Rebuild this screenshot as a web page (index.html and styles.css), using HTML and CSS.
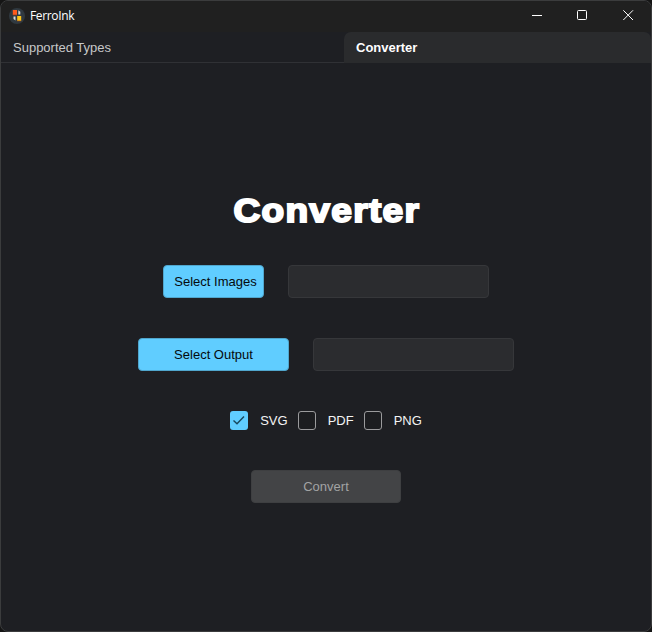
FILE: index.html
```
<!DOCTYPE html>
<html lang="en">
<head>
<meta charset="utf-8">
<title>FerroInk</title>
<link rel="stylesheet" href="styles.css">
</head>
<body>
<div class="window">
  <header class="titlebar">
    <svg class="logo" width="16" height="16" viewBox="0 0 16 16">
      <circle cx="8" cy="8" r="8" fill="#303940"/>
      <rect x="3.8" y="2" width="4.2" height="5" fill="#ff5a1c"/>
      <path d="M9.3 2.3l2 1.5v2.7h-2z" fill="#c9ced0"/>
      <path d="M4.5 8.5h2v4l-2-1.5z" fill="#d5d8d8"/>
      <rect x="8.2" y="8" width="4" height="5" fill="#ffc414"/>
      <path d="M4 7h4M8 13h4" stroke="#8d3c20" stroke-width=".7"/>
    </svg>
    <span class="app-name">FerroInk</span>
    <div class="controls">
      <svg width="46" height="31" viewBox="0 0 46 31"><path d="M18 14.5h10"/></svg>
      <svg width="45" height="31" viewBox="0 0 45 31"><rect x="17.5" y="9.5" width="9" height="9" rx="1"/></svg>
      <svg width="46" height="31" viewBox="0 0 46 31"><path d="M18.3 9.3l9.7 9.7M28 9.3L18.3 19"/></svg>
    </div>
  </header>
  <nav class="tabs">
    <div class="tab"><span>Supported Types</span></div>
    <div class="tab active"><span>Converter</span></div>
  </nav>
  <main class="content">
    <h1>Converter</h1>
    <div class="row">
      <button class="btn narrow"><span>Select Images</span></button>
      <input class="field" type="text" aria-label="Images">
    </div>
    <div class="row second">
      <button class="btn"><span>Select Output</span></button>
      <input class="field" type="text" aria-label="Output">
    </div>
    <div class="formats">
      <label><i class="box checked"><svg width="18" height="18" viewBox="0 0 18 18"><path d="M3.5 9.5l3.5 3.3 7-7.4"/></svg></i><span>SVG</span></label>
      <label><i class="box"></i><span>PDF</span></label>
      <label><i class="box"></i><span>PNG</span></label>
    </div>
    <button class="btn disabled" disabled><span>Convert</span></button>
  </main>
</div>
</body>
</html>
```
FILE: styles.css
```
* { box-sizing: border-box; }
body {
  margin: 0;
  background: #151515;
  font: 13px/16px "Liberation Sans", Arial, sans-serif;
  color: #f4f4f4;
}
.window {
  width: 652px;
  height: 632px;
  border: 1px solid #3b3c3d;
  border-radius: 8px;
  overflow: hidden;
  background: #1e1f23;
  display: flex;
  flex-direction: column;
}
.titlebar {
  height: 31px;
  flex: none;
  display: flex;
  align-items: center;
  padding-left: 8px;
  background: #202020;
}
.logo { margin-bottom: 2px; }
.app-name {
  margin: 0 0 1px 5px;
  font: 12px/16px "Open Sans", "Noto Sans", sans-serif;
  letter-spacing: -0.35px;
  color: #fff;
}
.controls { display: flex; margin-left: auto; }
.controls svg { fill: none; stroke: #fff; stroke-width: 1; }
.tabs { display: flex; height: 31px; flex: none; }
.tab {
  width: 343px;
  padding: 8px 12px 0;
  border-bottom: 1px solid #303135;
  color: #c7c8c9;
}
.tab.active {
  width: 307px;
  background: #2a2b2d;
  border-color: #2a2b2d;
  border-radius: 7px 7px 0 0;
  color: #fff;
  font-weight: bold;
}
.content {
  flex: 1;
  display: flex;
  flex-direction: column;
  align-items: center;
  padding-top: 127px;
}
h1 {
  margin: 0 0 35px;
  font-size: 34px;
  line-height: 40px;
  font-weight: bold;
  letter-spacing: 1.2px;
  padding-left: 2px;
  color: #fff;
  -webkit-text-stroke: 2px #fff;
  transform: scaleX(1.09);
}
.row { display: flex; gap: 24px; }
.second { margin-top: 40px; }
.btn {
  width: 151px;
  height: 33px;
  padding: 1px 0 0;
  border: 1px solid #50a6cd;
  border-radius: 4px;
  background: #60cdff;
  font: inherit;
  color: #050a0d;
}
.narrow { width: 101px; padding-left: 4px; white-space: nowrap; }
.field {
  width: 201px;
  height: 33px;
  border: 1px solid #36373a;
  border-radius: 4px;
  background: #2b2c2f;
  color: #fff;
  outline: 0;
}
.formats { display: flex; gap: 10px; margin: 40px 0; }
.formats label { display: flex; align-items: center; gap: 12px; }
.formats span { padding-top: 1px; }
.box {
  width: 18px;
  height: 19px;
  border: 1px solid #9b9b9d;
  border-radius: 3px;
  background: #1c1d20;
}
.checked { border: 0; background: #60cdff; }
.box svg { display: block; fill: none; stroke: #17485e; stroke-width: 1.4; }
.disabled { width: 150px; background: #434446; border-color: #3e3f41; color: #a2a3a4; }
```
